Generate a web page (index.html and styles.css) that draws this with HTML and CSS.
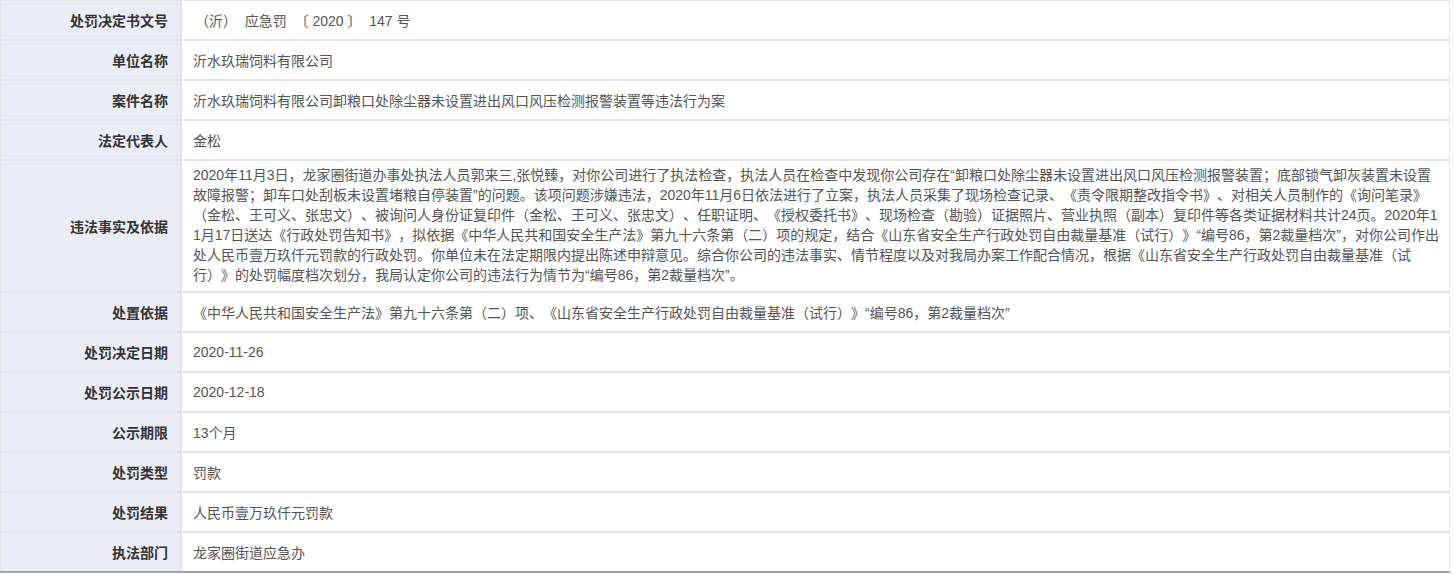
FILE: index.html
```html
<!DOCTYPE html>
<html lang="zh-CN">
<head>
<meta charset="utf-8">
<title>行政处罚信息</title>
<link rel="stylesheet" href="styles.css">
</head>
<body>
<div class="sheet">
  <div class="lbl">处罚决定书文号</div><div class="val docno">（沂）  应急罚  〔 2020 〕  147 号</div>
  <div class="lbl">单位名称</div><div class="val">沂水玖瑞饲料有限公司</div>
  <div class="lbl">案件名称</div><div class="val">沂水玖瑞饲料有限公司卸粮口处除尘器未设置进出风口风压检测报警装置等违法行为案</div>
  <div class="lbl">法定代表人</div><div class="val">金松</div>
  <div class="lbl">违法事实及依据</div>
  <div class="val long">2020年11月3日，龙家圈街道办事处执法人员郭来三,张悦臻，对你公司进行了执法检查，执法人员在检查中发现你公司存在“卸粮口处除尘器未设置进出风口风压检测报警装置；底部锁气卸灰装置未设置<br>故障报警；卸车口处刮板未设置堵粮自停装置”的问题。该项问题涉嫌违法，2020年11月6日依法进行了立案，执法人员采集了现场检查记录、《责令限期整改指令书》、对相关人员制作的《询问笔录》<br>（金松、王可义、张忠文）、被询问人身份证复印件（金松、王可义、张忠文）、任职证明、《授权委托书》、现场检查（勘验）证据照片、营业执照（副本）复印件等各类证据材料共计24页。2020年1<br>1月17日送达《行政处罚告知书》，拟依据《中华人民共和国安全生产法》第九十六条第（二）项的规定，结合《山东省安全生产行政处罚自由裁量基准（试行）》“编号86，第2裁量档次”，对你公司作出<br>处人民币壹万玖仟元罚款的行政处罚。你单位未在法定期限内提出陈述申辩意见。综合你公司的违法事实、情节程度以及对我局办案工作配合情况，根据《山东省安全生产行政处罚自由裁量基准（试<br>行）》的处罚幅度档次划分，我局认定你公司的违法行为情节为“编号86，第2裁量档次”。</div>
  <div class="lbl">处置依据</div><div class="val">《中华人民共和国安全生产法》第九十六条第（二）项、《山东省安全生产行政处罚自由裁量基准（试行）》“编号86，第2裁量档次”</div>
  <div class="lbl">处罚决定日期</div><div class="val">2020-11-26</div>
  <div class="lbl">处罚公示日期</div><div class="val">2020-12-18</div>
  <div class="lbl">公示期限</div><div class="val">13个月</div>
  <div class="lbl">处罚类型</div><div class="val">罚款</div>
  <div class="lbl">处罚结果</div><div class="val">人民币壹万玖仟元罚款</div>
  <div class="lbl">执法部门</div><div class="val">龙家圈街道应急办</div>
</div>
</body>
</html>
```

FILE: styles.css
```css
html, body {
  margin: 0;
  padding: 0;
  background: #ffffff;
}
body {
  font-family: "Liberation Sans", "Noto Sans CJK SC", sans-serif;
  font-size: 14px;
  text-spacing-trim: space-all;
}
.sheet {
  width: 1448px;
  display: grid;
  grid-template-columns: 179px 1fr;
  grid-auto-rows: minmax(38px, auto);
  gap: 2px;
  padding: 1px 1px 0 1px;
  background: #e4e4e4;
  border-bottom: 2px solid #a4a4a4;
  box-sizing: content-box;
}
.lbl {
  background: #eaedf5;
  color: #333333;
  font-weight: bold;
  padding: 0 12px 0 8px;
  display: flex;
  align-items: center;
  justify-content: flex-end;
}
.val {
  background: #ffffff;
  color: #555555;
  padding: 0 0 0 11px;
  display: flex;
  align-items: center;
  white-space: nowrap;
  overflow: hidden;
}
.val.docno {
  white-space: pre;
  padding-left: 13px;
}
.val.long {
  display: block;
  line-height: 20px;
  padding-top: 4px;
  padding-bottom: 6px;
}
```
